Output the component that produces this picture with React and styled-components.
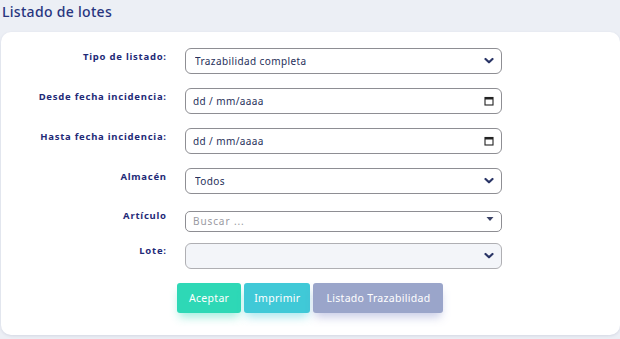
import React from 'react';
import styled, { createGlobalStyle } from 'styled-components';

const Global = createGlobalStyle`
  html, body {
    margin: 0;
    background: #eceff5;
    font-family: "Noto Sans", "Open Sans", sans-serif;
  }
`;

const Page = styled.div`
  width: 620px;
  height: 339px;
  overflow: hidden;
  box-sizing: border-box;
  padding: 2px 0 0 1px;
`;

const Title = styled.h1`
  margin: 0 0 10px 1px;
  font-size: 14px;
  font-weight: 500;
  color: #27357f;
  line-height: 20px;
  letter-spacing: 0.3px;
`;

const Card = styled.div`
  background: #fff;
  border-radius: 10px;
  box-shadow: 0 1px 3px rgba(40, 50, 110, 0.12);
  height: 303px;
  box-sizing: border-box;
  padding: 16px 0 0;
`;

const Form = styled.div`
  display: grid;
  grid-template-columns: 165px 317px;
  column-gap: 19px;
  row-gap: 14px;
  align-items: start;
`;

const Label = styled.label`
  text-align: right;
  font-size: 9.5px;
  font-weight: 700;
  color: #1f2b78;
  padding-top: ${p => p.$top || 2}px;
  white-space: nowrap;
  letter-spacing: 0.75px;
  margin-right: -0.75px;
`;

const Field = styled.div`
  position: relative;
  height: ${p => p.$h || 26}px;
`;

const Control = styled.input`
  width: 100%;
  height: 100%;
  box-sizing: border-box;
  border: 1px solid #8e8e93;
  border-radius: ${p => (p.$small ? 5 : 6)}px;
  background: ${p => (p.disabled ? '#eef2f7' : '#fff')};
  padding: 0 24px 0 ${p => p.$pad || 9}px;
  font-family: inherit;
  font-size: 10px;
  color: #27305a;
  outline: none;
  &::placeholder {
    color: ${p => p.$muted ? '#9a9aa2' : '#27305a'};
    letter-spacing: ${p => p.$muted ? '0.9px' : '0.4px'};
  }
`;

const SelectBox = styled.select`
  width: 100%;
  height: 100%;
  box-sizing: border-box;
  appearance: none;
  border: 1px solid #8e8e93;
  border-radius: 6px;
  background: ${p => (p.disabled ? '#eef2f7' : '#fff')};
  padding: 0 24px 0 9px;
  font-family: inherit;
  font-size: 10px;
  letter-spacing: 0.4px;
  color: #27305a;
  outline: none;
`;

const Icon = styled.span`
  position: absolute;
  right: 8px;
  top: 50%;
  transform: translateY(-50%);
  display: flex;
  pointer-events: none;
`;

const Buttons = styled.div`
  display: flex;
  gap: 3px;
  margin: 14px 0 0 176px;
`;

const Button = styled.button`
  height: 30px;
  padding: 0 ${p => p.$px || 10}px;
  border: none;
  border-radius: 3px;
  background: ${p => p.$bg};
  color: #fff;
  font-family: inherit;
  font-size: 10.5px;
  letter-spacing: 0.3px;
  box-shadow: 0 6px 10px -2px ${p => p.$shadow};
`;

const Chevron = () => (
  <svg width="10" height="7" viewBox="0 0 10 7">
    <path d="M1.5 1.5 L5 4.8 L8.5 1.5" fill="none" stroke="#2a3566" strokeWidth="2.2" strokeLinecap="round" strokeLinejoin="round" />
  </svg>
);

const Caret = () => (
  <svg width="8" height="5" viewBox="0 0 8 5">
    <path d="M0.5 0.5 H7.5 L4 4.5 Z" fill="#3a4266" />
  </svg>
);

const Calendar = () => (
  <svg width="10" height="10" viewBox="0 0 10 10">
    <rect x="1" y="1.5" width="8" height="7.5" fill="none" stroke="#222" strokeWidth="1.1" />
    <rect x="1" y="1.5" width="8" height="2" fill="#222" />
  </svg>
);

const SelectField = ({ options, disabled }) => (
  <Field>
    <SelectBox disabled={disabled} defaultValue={options[0]}>
      {options.map(o => <option key={o}>{o}</option>)}
    </SelectBox>
    <Icon><Chevron /></Icon>
  </Field>
);

const DateField = () => (
  <Field>
    <Control type="text" placeholder="dd / mm/aaaa" $pad={7} />
    <Icon><Calendar /></Icon>
  </Field>
);

export default function App() {
  return (
    <Page>
      <Global />
      <Title>Listado de lotes</Title>
      <Card>
        <Form>
          <Label $top={2}>Tipo de listado:</Label>
          <SelectField options={['Trazabilidad completa']} />

          <Label $top={2}>Desde fecha incidencia:</Label>
          <DateField />

          <Label $top={2}>Hasta fecha incidencia:</Label>
          <DateField />

          <Label $top={2}>Almacén</Label>
          <SelectField options={['Todos']} />

          <Label $top={1}>Artículo</Label>
          <Field $h={21}>
            <Control type="text" placeholder="Buscar ..." $small $muted $pad={7} />
            <Icon><Caret /></Icon>
          </Field>

          <Label $top={1}>Lote:</Label>
          <SelectField options={['']} disabled />
        </Form>
        <Buttons>
          <Button $bg="#2ed8b6" $shadow="rgba(46,216,182,0.45)" $px={12}>Aceptar</Button>
          <Button $bg="#40c9d7" $shadow="rgba(64,201,215,0.45)" $px={10}>Imprimir</Button>
          <Button $bg="#9aa5ca" $shadow="rgba(130,140,200,0.45)" $px={13}>Listado Trazabilidad</Button>
        </Buttons>
      </Card>
    </Page>
  );
}
